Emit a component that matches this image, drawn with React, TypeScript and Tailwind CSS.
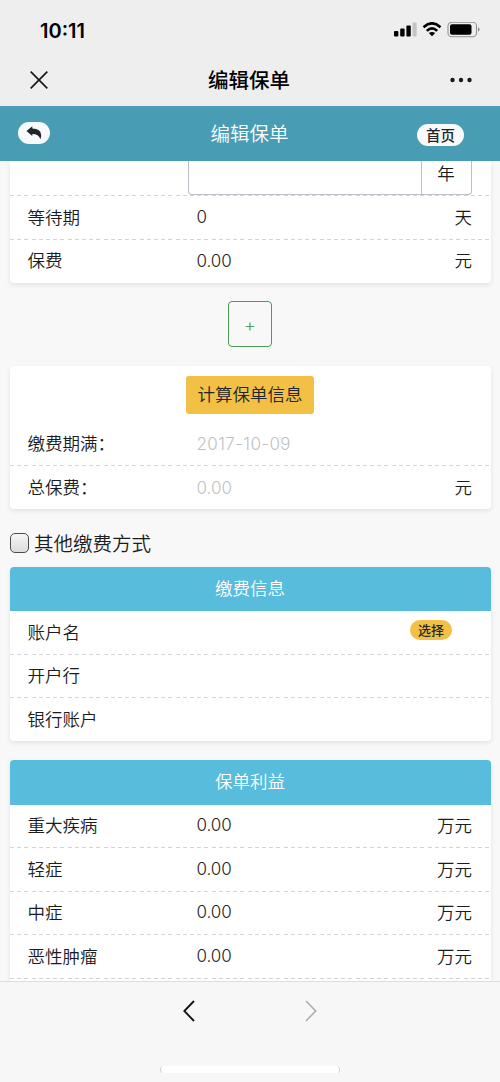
import type { ReactNode } from 'react';

type RowProps = {
  label: string;
  value?: string;
  unit?: string;
  valueClass?: string;
  last?: boolean;
  children?: ReactNode;
};

function Divider() {
  return (
    <div className="h-px w-full shrink-0 bg-[repeating-linear-gradient(90deg,#d2d4d8_0_4px,transparent_4px_7.2px)]" />
  );
}

function Row({ label, value, unit, valueClass = 'tracking-[-0.1px]', last, children }: RowProps) {
  return (
    <div className={last ? 'flex h-[43px] flex-col' : 'flex h-[43.5px] flex-col'}>
      <div className="flex flex-1 items-center pr-[18.5px] pl-[18px]">
        <span className="w-[169px] pb-[2px]">{label}</span>
        <span className={`flex-1 font-[Inter] text-[17px] ${valueClass}`}>{value}</span>
        {unit && <span className="pb-[2px]">{unit}</span>}
        {children}
      </div>
      {!last && <Divider />}
    </div>
  );
}

function CardTitle({ children }: { children: ReactNode }) {
  return (
    <h2 className="flex h-[44.5px] items-center justify-center rounded-t-[4px] bg-[#58bcdc] pb-[3px] text-white">
      {children}
    </h2>
  );
}

function StatusBar() {
  return (
    <div className="flex h-[54px] items-center justify-between pt-1.5 pr-5 pl-10">
      <span className="pt-px font-[Inter] text-[20px] font-semibold">10:11</span>
      <svg width="86" height="16" viewBox="0 0 86 16">
        <rect x="0" y="9" width="4.4" height="5.5" rx="1" />
        <rect x="6.2" y="6.5" width="4.4" height="8" rx="1" />
        <rect x="12.4" y="3.5" width="4.4" height="11" rx="1" />
        <rect x="18.5" y="0.5" width="4.2" height="14" rx="1" fill="#c4c4c4" />
        <path
          d="M29.5 5.2Q38 -2.6 46.5 5.2M32.8 8.9Q38 4 43.2 8.9"
          fill="none"
          stroke="#000"
          strokeWidth="2.6"
        />
        <path d="M38 14.2L34.8 11.1Q38 8.8 41.2 11.1Z" />
        <rect x="54" y="0.3" width="28.5" height="14.4" rx="3.8" fill="none" stroke="#929292" strokeWidth="1.1" />
        <rect x="56" y="2.3" width="21.5" height="10.4" rx="2" />
        <path d="M84 5.2Q85.7 6 85.7 7.5T84 9.8Z" fill="#929292" />
      </svg>
    </div>
  );
}

export default function App() {
  return (
    <div className="flex h-[1082px] w-[500px] flex-col overflow-hidden bg-[#f8f8f9] font-['Noto_Sans_CJK_SC',sans-serif] text-[17.5px] leading-none text-[#1b1c20]">
      <header className="h-[106px] shrink-0 bg-[#eeeeee] text-black">
        <StatusBar />
        <div className="flex h-[52px] items-center justify-between pr-7 pb-px pl-[30px]">
          <svg width="18" height="18" viewBox="0 0 18 18" fill="none" stroke="#1a1a1a" strokeWidth="1.7">
            <path d="M.7.7L17.3 17.3M17.3.7L.7 17.3" />
          </svg>
          <h1 className="pb-px text-[20.5px] font-medium">编辑保单</h1>
          <svg width="22" height="6" viewBox="0 0 22 6" fill="#1a1a1a">
            <circle cx="2.5" cy="3" r="2.2" />
            <circle cx="11" cy="3" r="2.2" />
            <circle cx="19.5" cy="3" r="2.2" />
          </svg>
        </div>
      </header>

      <nav className="flex h-[54.5px] shrink-0 items-center justify-between bg-[#489cb4] pr-9 pl-[18px]">
        <button className="mr-8 flex h-[22px] w-8 items-center justify-center rounded-full bg-[#f8f9fa] text-[#212529]">
          <svg width="16" height="14" viewBox="0 0 16 14" fill="currentColor">
            <path d="M.5 5L6.3 .3V2.6Q15 2.6 15.2 9.2Q15.2 11.5 14.4 13.2Q12.8 7.9 6.3 7.9V10Z" />
          </svg>
        </button>
        <span className="pb-0.5 text-[19.5px] font-[350] text-white">编辑保单</span>
        <button className="mt-1 flex h-[22px] w-[47px] items-center justify-center rounded-full bg-[#f8f9fa] pb-px text-[14.5px] font-medium text-[#212529]">
          首页
        </button>
      </nav>

      <main className="min-h-0 flex-1 overflow-hidden px-[9.5px] font-[350]">
        <section className="rounded-b-[4px] bg-white shadow-[0_2px_5px_rgba(0,0,0,0.09)]">
          <div className="flex h-[34.5px] justify-end pr-[19px]">
            <div className="flex w-[284px] rounded-b-[4px] border border-t-0 border-[#bcbec8]">
              <div className="flex-1" />
              <div className="flex w-[50px] justify-center border-l border-[#bcbec8] pt-[3px]">年</div>
            </div>
          </div>
          <Divider />
          <Row label="等待期" value="0" unit="天" />
          <Row label="保费" value="0.00" unit="元" last />
        </section>

        <div className="flex justify-center pt-[18.5px] pb-[19px]">
          <button className="h-[46px] w-11 rounded-[4px] border border-[#4f9a56] pt-1 font-[Inter] text-[18px] text-[#4f9a56]">
            +
          </button>
        </div>

        <section className="rounded-[4px] bg-white shadow-[0_2px_5px_rgba(0,0,0,0.09)]">
          <div className="flex h-[56.5px] justify-center pt-[10px]">
            <button className="h-[37.5px] w-32 rounded-[3px] bg-[#f2c044] pb-[3px] text-[#212529]">计算保单信息</button>
          </div>
          <Row label="缴费期满：" value="2017-10-09" valueClass="pt-px tracking-[0.4px] text-[#bfc1c5]" />
          <Row label="总保费：" value="0.00" unit="元" valueClass="pt-px text-[#bfc1c5]" last />
        </section>

        <div className="flex h-[57.5px] items-center gap-[5px] pt-[10px] text-[19.5px]">
          <span className="h-[19.5px] w-[19.5px] rounded-[5px] border border-[#4c4c4c] bg-linear-to-b from-[#f6f6f6] to-[#dcdcdc]" />
          <span className="pb-px">其他缴费方式</span>
        </div>

        <section className="mb-[19px] rounded-[4px] bg-white shadow-[0_2px_5px_rgba(0,0,0,0.09)]">
          <CardTitle>缴费信息</CardTitle>
          <Row label="账户名">
            <button className="mr-5 mb-1 h-5 w-[42px] rounded-full bg-[#f2c044] pb-0.5 text-[13px] font-medium text-[#212529]">
              选择
            </button>
          </Row>
          <Row label="开户行" />
          <Row label="银行账户" last />
        </section>

        <section className="rounded-[4px] bg-white shadow-[0_2px_5px_rgba(0,0,0,0.09)]">
          <CardTitle>保单利益</CardTitle>
          <Row label="重大疾病" value="0.00" unit="万元" />
          <Row label="轻症" value="0.00" unit="万元" />
          <Row label="中症" value="0.00" unit="万元" />
          <Row label="恶性肿瘤" value="0.00" unit="万元" />
          <div className="h-6" />
        </section>
      </main>

      <footer className="flex h-[101px] shrink-0 flex-col items-center justify-between border-t border-[#dddddd] bg-[#f7f7f7] pt-[18px] pb-[9px]">
        <div className="flex gap-[110px]">
          <svg width="12" height="22" viewBox="0 0 12 22" fill="none" stroke="#111" strokeWidth="1.8">
            <path d="M11 1L1.3 11L11 21" />
          </svg>
          <svg width="12" height="22" viewBox="0 0 12 22" fill="none" stroke="#aaa" strokeWidth="1.5">
            <path d="M1 1L10.7 11L1 21" />
          </svg>
        </div>
        <div className="h-[7px] w-[180px] rounded-full border-x border-[#cfcfcf] bg-white" />
      </footer>
    </div>
  );
}
